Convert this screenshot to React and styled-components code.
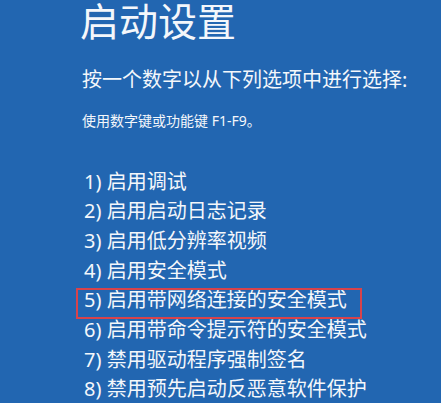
import styled, { createGlobalStyle } from "styled-components";

const GlobalStyle = createGlobalStyle`
  html, body {
    margin: 0;
    padding: 0;
    background: #2266b1;
  }
  body {
    font-family: "Noto Sans", "Noto Sans CJK SC", sans-serif;
    color: #f4f7fb;
  }
`;

const options = [
  "启用调试",
  "启用启动日志记录",
  "启用低分辨率视频",
  "启用安全模式",
  "启用带网络连接的安全模式",
  "启用带命令提示符的安全模式",
  "禁用驱动程序强制签名",
  "禁用预先启动反恶意软件保护",
];

export default function App() {
  return (
    <>
      <GlobalStyle />
      <Screen>
        <Title>启动设置</Title>
        <Prompt>按一个数字以从下列选项中进行选择:</Prompt>
        <Hint>使用数字键或功能键 F1-F9。</Hint>
        <OptionList>
          {options.map((label, i) => (
            <Option key={label} $selected={i === 4}>
              {i + 1}) {label}
            </Option>
          ))}
        </OptionList>
      </Screen>
    </>
  );
}

const Screen = styled.div`
  width: 441px;
  height: 403px;
  overflow: hidden;
  box-sizing: border-box;
  padding: 0 0 0 82px;
  display: flex;
  flex-direction: column;
  align-items: flex-start;
`;

const Title = styled.h1`
  margin: 0 0 0 -2px;
  font-size: 39px;
  font-weight: 400;
  line-height: 42px;
`;

const Prompt = styled.div`
  margin-top: 24px;
  font-size: 20px;
  line-height: 28px;
`;

const Hint = styled.div`
  margin-top: 17px;
  font-size: 14px;
  line-height: 20px;
`;

const OptionList = styled.ul`
  list-style: none;
  margin: 35.5px 0 0 -6px;
  padding: 0;
  display: flex;
  flex-direction: column;
  align-items: flex-start;
`;

// the red frame is a highlight drawn over the chosen row
const Option = styled.li`
  position: relative;
  height: 29.7px;
  line-height: 29.7px;
  padding: 0 ${(p) => (p.$selected ? "15px" : "8px")} 0 8px;
  font-size: 20px;
  white-space: nowrap;

  &::after {
    content: "";
    display: ${(p) => (p.$selected ? "block" : "none")};
    position: absolute;
    left: 0;
    right: 0;
    top: 3px;
    bottom: -4px;
    border: 2px solid #d8434b;
    pointer-events: none;
  }
`;
